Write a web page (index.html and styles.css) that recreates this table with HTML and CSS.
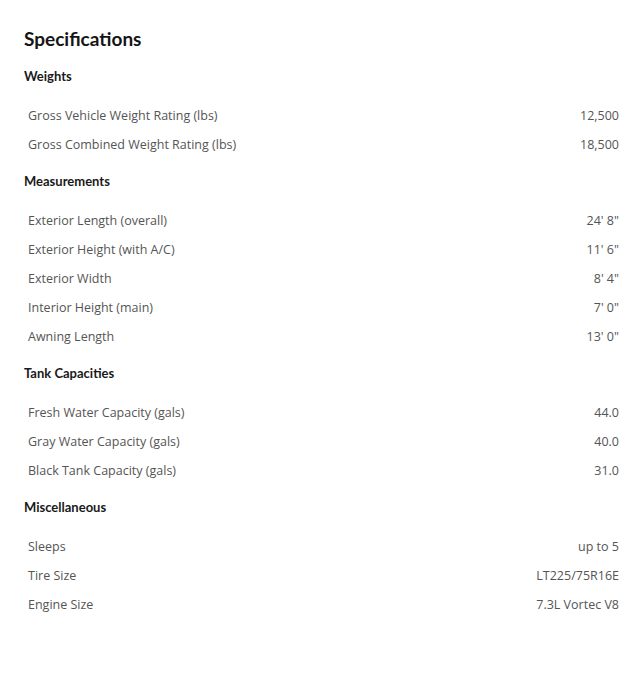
FILE: index.html
```html
<!DOCTYPE html>
<html lang="en">
<head>
<meta charset="utf-8">
<title>Specifications</title>
<link rel="stylesheet" href="styles.css">
</head>
<body>
<div class="specs">
  <h2 class="title">Specifications</h2>

  <section class="group">
    <h3 class="group-title">Weights</h3>
    <div class="row"><span class="label">Gross Vehicle Weight Rating (lbs)</span><span class="value">12,500</span></div>
    <div class="row"><span class="label">Gross Combined Weight Rating (lbs)</span><span class="value">18,500</span></div>
  </section>

  <section class="group">
    <h3 class="group-title">Measurements</h3>
    <div class="row"><span class="label">Exterior Length (overall)</span><span class="value">24' 8"</span></div>
    <div class="row"><span class="label">Exterior Height (with A/C)</span><span class="value">11' 6"</span></div>
    <div class="row"><span class="label">Exterior Width</span><span class="value">8' 4"</span></div>
    <div class="row"><span class="label">Interior Height (main)</span><span class="value">7' 0"</span></div>
    <div class="row"><span class="label">Awning Length</span><span class="value">13' 0"</span></div>
  </section>

  <section class="group">
    <h3 class="group-title">Tank Capacities</h3>
    <div class="row"><span class="label">Fresh Water Capacity (gals)</span><span class="value">44.0</span></div>
    <div class="row"><span class="label">Gray Water Capacity (gals)</span><span class="value">40.0</span></div>
    <div class="row"><span class="label">Black Tank Capacity (gals)</span><span class="value">31.0</span></div>
  </section>

  <section class="group">
    <h3 class="group-title">Miscellaneous</h3>
    <div class="row"><span class="label">Sleeps</span><span class="value">up to 5</span></div>
    <div class="row"><span class="label">Tire Size</span><span class="value">LT225/75R16E</span></div>
    <div class="row"><span class="label">Engine Size</span><span class="value">7.3L Vortec V8</span></div>
  </section>
</div>
</body>
</html>
```
FILE: styles.css
```css
html, body {
  margin: 0;
  padding: 0;
  background: #ffffff;
}

.specs {
  padding: 27px 17px 0 24px;
  font-family: "Open Sans", "Liberation Sans", sans-serif;
}

.title {
  margin: 0 0 16px 0;
  font-family: "Lato", "Noto Sans", sans-serif;
  font-size: 19px;
  font-weight: 700;
  line-height: 24px;
  color: #151515;
}

.group {
  display: flex;
  flex-direction: column;
  margin-bottom: 13px;
}

.group-title {
  margin: 0 0 15px 0;
  font-family: "Lato", "Noto Sans", sans-serif;
  font-size: 13px;
  font-weight: 700;
  line-height: 19px;
  color: #1a1a1a;
}

.row {
  display: flex;
  justify-content: space-between;
  align-items: center;
  height: 29px;
  padding: 0 4px;
  font-size: 12.5px;
  font-weight: 400;
  color: #555555;
}
```
